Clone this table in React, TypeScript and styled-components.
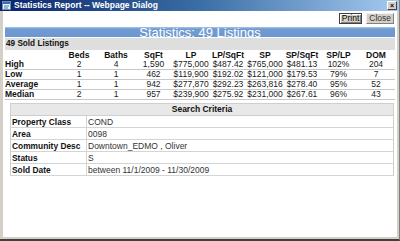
import React from "react";
import styled, { createGlobalStyle } from "styled-components";

const GlobalStyle = createGlobalStyle`
  html, body {
    margin: 0;
    padding: 0;
    width: 400px;
    height: 241px;
    overflow: hidden;
    background: #d4d0c8;
  }
`;

const font = `"Liberation Sans Narrow", "Liberation Sans", Arial, sans-serif`;

const Window = styled.div`
  box-sizing: border-box;
  width: 400px;
  height: 241px;
  display: flex;
  flex-direction: column;
  background: #d4d0c8;
  border-bottom: 2px solid #404040;
  border-right: 1px solid #808080;
  font-family: ${font};
`;

const TitleBar = styled.div`
  height: 11px;
  flex: none;
  display: flex;
  align-items: center;
  padding: 0 2px;
  background: linear-gradient(to right, #0a246a 0%, #3a6ea5 50%, #a6caf0 100%);
`;

const TitleText = styled.span`
  flex: 1;
  margin-left: 3px;
  color: #fff;
  font-weight: bold;
  font-size: 8.5px;
  line-height: 11px;
  white-space: nowrap;
`;

const TitleClose = styled.span`
  width: 8px;
  height: 7px;
  display: flex;
  align-items: center;
  justify-content: center;
  background: #d4d0c8;
  border: 1px solid;
  border-color: #fff #404040 #404040 #fff;
  font-size: 7px;
  line-height: 7px;
  font-weight: bold;
  color: #000;
  font-family: "Liberation Sans", sans-serif;
`;

const Client = styled.div`
  flex: 1;
  margin: 0 2px 2px 3px;
  padding: 0 2px;
  background: #fff;
  display: flex;
  flex-direction: column;
`;

const Toolbar = styled.div`
  display: flex;
  justify-content: flex-end;
  gap: 4px;
  padding: 2px 1px 0 0;
`;

const Button = styled.button<{ $default?: boolean }>`
  height: 11px;
  padding: 0 2px;
  font-family: ${font};
  font-size: 8.5px;
  line-height: 9px;
  color: ${(p) => (p.$default ? "#000" : "#333")};
  background: #d4d0c8;
  border: 1px solid;
  border-color: ${(p) => (p.$default ? "#404040" : "#f0f0f0 #808080 #808080 #f0f0f0")};
  box-shadow: ${(p) => (p.$default ? "inset 1px 1px 0 #fff, inset -1px -1px 0 #808080" : "none")};
  border-radius: 0;
`;

const Banner = styled.div`
  margin-top: 3px;
  height: 10px;
  background: linear-gradient(to bottom, #a9c5ea 0, #6f9bd1 2px, #6d98cf 100%);
  color: #fff;
  text-align: center;
  font-size: 13px;
  line-height: 11px;
  white-space: nowrap;
  overflow: visible;
`;

const SectionBar = styled.div`
  height: 12px;
  margin-top: 1px;
  background: #dedede;
  font-weight: bold;
  font-size: 8.2px;
  line-height: 12px;
  padding-left: 1px;
  color: #111;
`;

const StatsTable = styled.table`
  margin-top: 1px;
  width: 390px;
  table-layout: fixed;
  border-collapse: collapse;
  font-size: 8.5px;
  color: #222;
`;

const HeadCell = styled.th<{ $left?: boolean }>`
  padding: 0;
  height: 9px;
  line-height: 9px;
  font-weight: bold;
  text-align: ${(p) => (p.$left ? "left" : "center")};
  color: #111;
`;

const DataRow = styled.tr`
  border-bottom: 1px solid #c8c8c8;
`;

const RowLabel = styled.td`
  padding: 0;
  height: 9px;
  line-height: 9px;
  font-weight: bold;
  color: #111;
`;

const Value = styled.td`
  padding: 0;
  height: 9px;
  line-height: 9px;
  text-align: center;
`;

const CriteriaTable = styled.table`
  margin: 3px 1px 0 5px;
  width: 384px;
  table-layout: fixed;
  border-collapse: collapse;
  border: 1px solid #cfcfcf;
  font-size: 8.5px;
  color: #222;
`;

const CriteriaHead = styled.th`
  height: 11px;
  line-height: 11px;
  padding: 0;
  background: #e8e8e8;
  border-bottom: 1px solid #cfcfcf;
  font-weight: bold;
  color: #111;
  text-align: center;
`;

const CriteriaRow = styled.tr`
  border-bottom: 1px solid #d4d4d4;
`;

const CriteriaLabel = styled.td`
  line-height: 9px;
  padding: 2px 0 0 1px;
  font-weight: bold;
  font-size: 8.4px;
  color: #111;
  border-right: 1px solid #d4d4d4;
`;

const CriteriaValue = styled.td`
  padding: 2px 0 0 1px;
  line-height: 9px;
  color: #333;
`;

const columns = ["Beds", "Baths", "SqFt", "LP", "LP/SqFt", "SP", "SP/SqFt", "SP/LP", "DOM"];
const widths = [56, 36, 38, 37, 38, 36, 38, 36, 37, 38];

const rows = [
  ["High", "2", "4", "1,590", "$775,000", "$487.42", "$765,000", "$481.13", "102%", "204"],
  ["Low", "1", "1", "462", "$119,900", "$192.02", "$121,000", "$179.53", "79%", "7"],
  ["Average", "1", "1", "942", "$277,870", "$292.23", "$263,816", "$278.40", "95%", "52"],
  ["Median", "2", "1", "957", "$239,900", "$275.92", "$231,000", "$267.61", "96%", "43"],
];

const criteria = [
  ["Property Class", "COND"],
  ["Area", "0098"],
  ["Community Desc", "Downtown_EDMO , Oliver"],
  ["Status", "S"],
  ["Sold Date", "between 11/1/2009 - 11/30/2009"],
];

function DialogIcon() {
  return (
    <svg width="9" height="9" viewBox="0 0 9 9">
      <rect x="0.5" y="0.5" width="8" height="8" fill="#e8f0f8" stroke="#6a8ab8" />
      <rect x="1" y="1" width="7" height="2" fill="#3a6ea5" />
      <path d="M2 5h5M2 7h4" stroke="#4a7ab0" strokeWidth="1" />
    </svg>
  );
}

export default function App() {
  return (
    <Window>
      <GlobalStyle />
      <TitleBar>
        <DialogIcon />
        <TitleText>Statistics Report -- Webpage Dialog</TitleText>
        <TitleClose>×</TitleClose>
      </TitleBar>
      <Client>
        <Toolbar>
          <Button $default>Print</Button>
          <Button>Close</Button>
        </Toolbar>
        <Banner>Statistics: 49 Listings</Banner>
        <SectionBar>49 Sold Listings</SectionBar>
        <StatsTable>
          <colgroup>
            {widths.map((w, i) => (
              <col key={i} style={{ width: w }} />
            ))}
          </colgroup>
          <thead>
            <tr>
              <HeadCell $left />
              {columns.map((c) => (
                <HeadCell key={c}>{c}</HeadCell>
              ))}
            </tr>
          </thead>
          <tbody>
            {rows.map((r) => (
              <DataRow key={r[0]}>
                <RowLabel>{r[0]}</RowLabel>
                {r.slice(1).map((v, i) => (
                  <Value key={i}>{v}</Value>
                ))}
              </DataRow>
            ))}
          </tbody>
        </StatsTable>
        <CriteriaTable>
          <colgroup>
            <col style={{ width: 76 }} />
            <col />
          </colgroup>
          <thead>
            <tr>
              <CriteriaHead colSpan={2}>Search Criteria</CriteriaHead>
            </tr>
          </thead>
          <tbody>
            {criteria.map(([k, v]) => (
              <CriteriaRow key={k}>
                <CriteriaLabel>{k}</CriteriaLabel>
                <CriteriaValue>{v}</CriteriaValue>
              </CriteriaRow>
            ))}
          </tbody>
        </CriteriaTable>
      </Client>
    </Window>
  );
}
